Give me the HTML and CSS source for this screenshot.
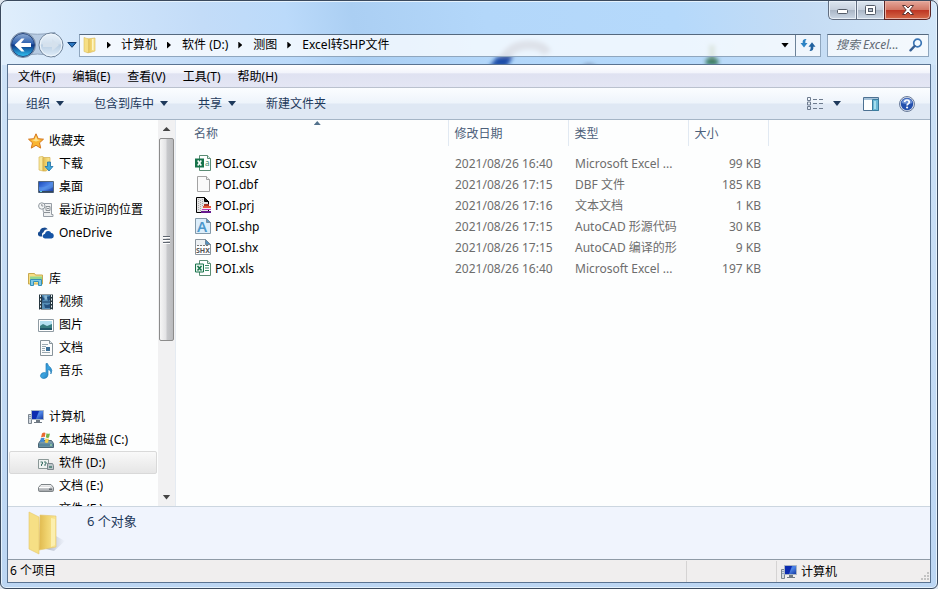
FILE: index.html
```html
<!DOCTYPE html>
<html lang="zh-CN">
<head>
<meta charset="utf-8">
<meta name="viewport" content="width=device-width, initial-scale=1">
<title>Excel转SHP文件</title>
<link rel="stylesheet" href="styles.css">
</head>
<body>
<svg class="defs" width="0" height="0" aria-hidden="true">
  <defs>
    <linearGradient id="gold" x1="0" x2="1"><stop offset="0" stop-color="#e0b94e"/><stop offset=".5" stop-color="#f0d470"/><stop offset="1" stop-color="#fae794"/></linearGradient>
    <linearGradient id="blue" x1="0" y1="0" x2="1" y2="1"><stop offset="0" stop-color="#1747b8"/><stop offset=".5" stop-color="#4f86e8"/><stop offset="1" stop-color="#10339c"/></linearGradient>
    <linearGradient id="metal" x1="0" y1="0" x2="0" y2="1"><stop offset="0" stop-color="#fafafa"/><stop offset="1" stop-color="#9b9fa3"/></linearGradient>
    <linearGradient id="orb" x1="0" y1="0" x2="0" y2="1"><stop offset="0" stop-color="#8fabd2"/><stop offset=".45" stop-color="#2a5eae"/><stop offset=".5" stop-color="#0b3585"/><stop offset="1" stop-color="#32c5f4"/></linearGradient>
    <linearGradient id="glass" x1="0" y1="0" x2="0" y2="1"><stop offset="0" stop-color="#eaf3fb"/><stop offset=".45" stop-color="#d2e0ee"/><stop offset=".5" stop-color="#b9cee3"/><stop offset="1" stop-color="#e2effa"/></linearGradient>
    <linearGradient id="note" x1="0" y1="0" x2="1" y2="1"><stop offset="0" stop-color="#1f75b5"/><stop offset=".5" stop-color="#3ba4e0"/><stop offset="1" stop-color="#1c6dac"/></linearGradient>
    <symbol id="computer" viewBox="0 0 16 16">
      <path d="M.5 5.500h3v9h-3z" fill="#d5dbe1" stroke="#7b858f"/><path d="M1.500 7.500h1M1.500 9.500h1" stroke="#4e6f92"/>
      <path d="M3.500 1.500h12v9h-12z" fill="url(#blue)" stroke="#a9b5c4"/>
      <path d="M4 2h7l-3 8H4z" fill="#0c2bb0"/>
      <path d="M8 11h4v2h2v1H6v-1h2z" fill="#6f7983"/>
    </symbol>
  </defs>
</svg>
<div class="window">
  <svg class="backdrop" viewBox="0 0 280 64" aria-hidden="true">
    <defs><filter id="soft" x="-30%" y="-30%" width="160%" height="160%"><feGaussianBlur stdDeviation="2"/></filter></defs>
    <g filter="url(#soft)">
      <path d="M32 62Q40 44 60 44Q74 44 78 52" fill="none" stroke="#7f8fac" stroke-width="9"/>
      <path d="M20 66L28 56L44 55L38 66z" fill="#1c4ea8"/>
      <path d="M112 66Q120 60 128 66z" fill="#687896"/>
      <path d="M240 44h6v18h-6z" fill="#7da392"/>
      <path d="M237 58h12v6h-12z" fill="#2d7658"/>
    </g>
  </svg>

  <header class="titlebar">
    <div class="caption">
      <button class="cap" aria-label="最小化"><svg width="13" height="9" viewBox="0 0 13 9"><rect x="1.500" y="3.500" width="10" height="4" rx="1" fill="#fff" stroke="#545c68"/></svg></button>
      <button class="cap" aria-label="最大化"><svg width="13" height="11" viewBox="0 0 13 11"><rect x="1.500" y=".5" width="10" height="9" rx="1" fill="#fff" stroke="#545c68"/><rect x="4.500" y="3.500" width="4" height="3" fill="#b5bdc9" stroke="#545c68"/></svg></button>
      <button class="cap close" aria-label="关闭"><svg width="14" height="12" viewBox="0 0 14 12"><path d="M1.500 1.500h3L7 4l2.500-2.500h3L8.800 6l3.700 4.500h-3L7 8l-2.500 2.500h-3L5.200 6z" fill="#fff" stroke="#5a3433"/></svg></button>
    </div>
  </header>

  <nav class="navbar" aria-label="导航">
    <button class="orbs" aria-label="后退和前进">
      <svg width="60" height="28" viewBox="0 0 60 28">
        <path d="M12 1.500Q28 5 46 1.500V26Q28 20 12 26z" fill="#b7cbe2" stroke="#93a7bf"/>
        <circle cx="14" cy="14" r="12.500" fill="#dde7f1" stroke="#6f849d"/>
        <circle cx="14" cy="14" r="11.500" fill="url(#orb)" stroke="#24447c"/>
        <path d="M5.500 14l7-6.500h3L12 12h10v4H12l3.500 4.500h-3z" fill="#fff"/>
        <circle cx="42" cy="14" r="12" fill="url(#glass)" stroke="#74879d"/>
        <circle cx="42" cy="14" r="10.800" fill="none" stroke="#eff6fc"/>
        <path d="M50 14l-7-6v4h-9v4h9v4z" fill="#d5e1ed"/>
      </svg>
    </button>
    <button class="recent" aria-label="最近的页面"><svg width="10" height="6" viewBox="0 0 10 6"><path d="M.8.5h8.400L5 5.300z" fill="#2b77c0" stroke="#123d71"/></svg></button>
    <div class="address">
      <svg class="folder" width="16" height="18" viewBox="0 0 16 18"><path d="M5 3l8-1v13l-5 1.500H5z" fill="url(#gold)" stroke="#d8b654" stroke-width=".6"/><path d="M2 1.500l4.500 1.500v14L2 15.500z" fill="#f6df85" stroke="#dcbf62" stroke-width=".6"/><path d="M10 3h1.500v11H10z" fill="#fdf5c4"/></svg>
      <ol class="crumbs">
        <li><a href="#">计算机</a></li>
        <li><a href="#">软件 (D:)</a></li>
        <li><a href="#">测图</a></li>
        <li><a href="#">Excel转SHP文件</a></li>
      </ol>
      <button class="drop" aria-label="以前的位置"><i class="tri"></i></button>
      <button class="refresh" aria-label="刷新"><svg width="16" height="14" viewBox="0 0 16 14"><path d="M6.500 1Q2 .8 2.700 5H.5L4 9.500 7.500 5H5.300Q5 2.500 6.500 1z" fill="#2c83c4"/><path d="M9.500 13q4.500.2 3.800-4.200h2.200L12 4.300 8.500 8.800h2.200q.3 2.500-1.200 4.200z" fill="#22629f"/></svg></button>
    </div>
    <label class="search">
      <input type="text" aria-label="搜索" placeholder="搜索 Excel...">
      <svg width="14" height="14" viewBox="0 0 14 14"><circle cx="8.500" cy="5" r="3.800" fill="#f3faff" stroke="#3a75b5" stroke-width="1.700"/><path d="M5.600 8L1.500 12.300" stroke="#365f93" stroke-width="2.400" stroke-linecap="round"/></svg>
    </label>
  </nav>

  <main class="client">
    <div class="menubar">
      <button>文件(F)</button><button>编辑(E)</button><button>查看(V)</button><button>工具(T)</button><button>帮助(H)</button>
    </div>
    <div class="toolbar">
      <button>组织<i class="tri"></i></button>
      <button>包含到库中<i class="tri"></i></button>
      <button>共享<i class="tri"></i></button>
      <button>新建文件夹</button>
      <span class="tools">
        <button class="views" aria-label="更改您的视图">
          <svg width="16" height="14" viewBox="0 0 16 14"><g fill="none" stroke="#6d7b8e"><path d="M.5.5h3v3h-3zM.5 5h3v3h-3zM.5 9.500h3v3h-3z"/><path d="M6 2.500h4M12 2.500h4M6 6.500h4M12 6.500h4M6 11.500h4M12 11.500h4"/></g></svg>
          <i class="tri"></i>
        </button>
        <button aria-label="显示预览窗格"><svg width="16" height="14" viewBox="0 0 16 14"><path d="M.5.5h15v13H.5z" fill="#fff" stroke="#4d7192"/><path d="M1 1h14v2H1z" fill="#a5c2d9"/><path d="M9.500 2.500h6v11h-6z" fill="#6ab8d6" stroke="#3b7d9f"/><path d="M11 4h2v8h-2z" fill="#a6deee"/></svg></button>
        <button aria-label="获取帮助"><svg width="16" height="16" viewBox="0 0 16 16"><circle cx="8" cy="8" r="7.500" fill="#dce3ef" stroke="#6b7c9a"/><circle cx="8" cy="8" r="6.200" fill="#2450ad"/><path d="M2.500 7a5.600 5.600 0 0 1 11 0q-5 2-11 0z" fill="#6d90d4"/><path d="M5.600 6.200Q5.800 4 8 4t2.300 2.100Q10.300 7.300 9 8q-.9.500-.9 1.500" fill="none" stroke="#fff" stroke-width="1.700"/><circle cx="8.100" cy="11.500" r="1.100" fill="#fff"/></svg></button>
      </span>
    </div>

    <div class="body">
      <aside class="tree">
        <ul>
          <li class="root"><svg width="16" height="16" viewBox="0 0 16 16"><path d="M8 .8l2.200 4.900 5.300.5-4 3.600 1.200 5.300L8 12.300l-4.700 2.800 1.200-5.300-4-3.600 5.300-.5z" fill="#f9b632" stroke="#d5761b"/><path d="M8 3l1.400 3.600 3.100.5L8 8.500 3.500 7l3.100-.4z" fill="#ffe28a"/></svg>收藏夹</li>
          <li><svg width="16" height="16" viewBox="0 0 16 16"><path d="M1 1l4-.7V15l-4-1z" fill="#f8e89c" stroke="#d9b95c" stroke-width=".7"/><path d="M5 1.500h7V12l-4 3H5z" fill="url(#gold)" stroke="#d3ad4b" stroke-width=".7"/><path d="M9.500 6h3v4.500H15L11 15l-4-4.500h2.500z" fill="#41a9dc" stroke="#1c70a8" stroke-width=".8"/></svg>下载</li>
          <li><svg width="16" height="16" viewBox="0 0 16 16"><path d="M.5 2.500h15v11H.5z" fill="url(#blue)" stroke="#54677d"/><path d="M1 12h14v1.500H1z" fill="#31475f"/><path d="M2 12.500h2" stroke="#5dd0de"/><path d="M1 8q8 1 14-5v5q-6 4-14 3z" fill="#5d9cea" opacity=".5"/></svg>桌面</li>
          <li><svg width="16" height="16" viewBox="0 0 16 16"><path d="M4 1.500h9.500v11H15v2H5.500v-4z" fill="#eef0f1" stroke="#969da5"/><circle cx="3.800" cy="4" r="3.200" fill="#f4f6f7" stroke="#91999f"/><path d="M3.800 2v2h1.500M8 4.500h4v4H8zM6 10.500h6M9 6.500h2" fill="none" stroke="#8c9297"/></svg>最近访问的位置</li>
          <li><svg width="16" height="16" viewBox="0 0 16 16"><path d="M4.500 11.500H2.200A2.600 2.600 0 0 1 1.800 6.400Q2.500 2.600 6 2.700q2-.6 3.800 1.500-3.500 0-4.300 3.100-2.400.8-1 4.200z" fill="#174b91"/><path d="M7 13.500Q4.600 13.300 4.800 11q.2-2 2.200-2.200.5-3.100 3.400-2.900 2 .1 2.800 2.100Q15.700 8.200 15.800 11q-.1 2.400-2.300 2.500z" fill="#1554a5"/></svg>OneDrive</li>
        </ul>
        <ul>
          <li class="root"><svg width="16" height="16" viewBox="0 0 16 16"><path d="M.5 2.500h6l1 1.500h7v9H.5z" fill="#f6df85" stroke="#c9a94e"/><path d="M2 5.500h12V8H2z" fill="#94d68e"/><path d="M2.500 14.500v-6h11v6h-3v-4h-5v4z" fill="#7fc9e9" stroke="#3490b8"/></svg>库</li>
          <li><svg width="16" height="16" viewBox="0 0 16 16"><path d="M1 .5h14v15H1z" fill="#263740"/><path d="M4 1h8v14H4z" fill="#568eb6"/><path d="M4 8h8" stroke="#183d64"/><path d="M4 2l3 3-3 2zM9 3l3-1v4l-2 1zM6 10l3 1 3-1v4H7z" fill="#24507d"/><path d="M6 1.500h3v4H7z" fill="#8db9d5"/><path d="M2.500 1v15M13.500 1v15" stroke="#e5edf1" stroke-dasharray="2 1.500"/></svg>视频</li>
          <li><svg width="16" height="16" viewBox="0 0 16 16"><path d="M.5 2.500h15v12H.5z" fill="#fff" stroke="#8f9ba3"/><path d="M2 4h12v9H2z" fill="#b4e0f1"/><path d="M2 9l3-2 4 2 5-2v6H2z" fill="#387d80"/><path d="M2 11h12v2H2z" fill="#205669"/></svg>图片</li>
          <li><svg width="16" height="16" viewBox="0 0 16 16"><path d="M2.500.5h9l3 3v12h-12z" fill="#fbfcfc" stroke="#87939a"/><path d="M11.500.5v3h3" fill="#dbe3e7" stroke="#87939a"/><path d="M4 4.500h6M4 6.500h4M4 8.500h3M4 10.500h3M4 12.500h8" stroke="#9aa9b1"/><path d="M8 7h4v4H8z" fill="#3c7098"/></svg>文档</li>
          <li><svg width="16" height="16" viewBox="0 0 16 16"><path d="M8 .5h1.500q.5 2.500 3 4 2.500 2.800.3 6.500.8-3.500-2.800-4.500v5.500q-.5 3.200-4 3.500-3.800-.2-3.500-3.200.8-2.900 4-2.800L8 10z" fill="url(#note)" stroke="#257fb9" stroke-width=".7"/></svg>音乐</li>
        </ul>
        <ul>
          <li class="root"><svg width="16" height="16"><use href="#computer"/></svg>计算机</li>
          <li><svg width="16" height="16" viewBox="0 0 16 16"><path d="M2.500 8.500h11l2 3v4H.5v-4z" fill="#7999a9" stroke="#4b6574"/><path d="M1 11.500h14v3H1z" fill="#58869b"/><path d="M12 13h2" stroke="#b5f2aa"/><path d="M4 1.500q2-1.500 3.500-.5l-.7 4Q5 4.500 3 5.500z" fill="#e96a30"/><path d="M8.500 1.300q2 1 3.500.2l-1 4q-1.500 1-3.200-.2z" fill="#76b34a"/><path d="M2.800 6.300q2-1 3.800-.3l-.8 4Q4 9.300 2 10.300z" fill="#438ad0"/><path d="M7.500 6.300q2 1 3.500.2l-1 4q-1.500 1-3.200-.2z" fill="#f4cc45"/></svg>本地磁盘 (C:)</li>
          <li class="selected"><svg width="16" height="16" viewBox="0 0 16 16"><path d="M.5 4.500h10v9H.5z" fill="#eff3f2" stroke="#8b9897"/><path d="M2.500 7h2v2h-1v2M6 7h2v2H7v2" fill="none" stroke="#41756b"/><path d="M9.500 8.500h5l1 2v4h-6z" fill="#bbc4c8" stroke="#7c878d"/><path d="M11 11h3v2h-3z" fill="#5f8d83"/></svg>软件 (D:)</li>
          <li><svg width="16" height="16" viewBox="0 0 16 16"><path d="M3 6.500h10l2.500 3v2.800q0 1.200-1.200 1.200H1.700Q.5 13.500.5 12.300V9.500z" fill="url(#metal)" stroke="#7e8487"/><path d="M1 9.500h11" stroke="#fff"/><path d="M11 10.500h3v1.500h-3z" fill="#666d72"/></svg>文档 (E:)</li>
          <li><svg width="16" height="16" viewBox="0 0 16 16"><path d="M3 9.500h10l2.500 3v3H.5v-3z" fill="url(#metal)" stroke="#7e8487"/></svg>文件 (F:)</li>
        </ul>
      </aside>
      <div class="scrollbar">
        <button aria-label="向上滚动"><i class="tri up"></i></button>
        <div class="track"><div class="thumb"><i class="grip"></i></div></div>
        <button aria-label="向下滚动"><i class="tri"></i></button>
      </div>

      <section class="files">
        <table>
          <colgroup><col class="c-name"><col class="c-date"><col class="c-type"><col class="c-size"></colgroup>
          <thead><tr><th class="sorted">名称<i class="tri up"></i></th><th>修改日期</th><th>类型</th><th>大小</th></tr></thead>
          <tbody>
            <tr><td><span class="file"><svg width="16" height="16" viewBox="0 0 16 16"><path d="M4.500.5h8l3 3v12h-11z" fill="#fff" stroke="#5b8c74"/><path d="M12.500.5v3h3" fill="#e8f0ec" stroke="#5b8c74"/><path d="M0 3.500h9v9H0z" fill="#17734a"/><path d="M2.700 5.500l3.600 5M6.300 5.500l-3.600 5" stroke="#fff" stroke-width="1.500"/><text x="10" y="11" font-size="8" fill="#3c8b68">a</text></svg>POI.csv</span></td><td>2021/08/26 16:40</td><td>Microsoft Excel ...</td><td>99 KB</td></tr>
            <tr><td><span class="file"><svg width="16" height="16" viewBox="0 0 16 16"><path d="M2.500.5h9l3 3v12h-12z" fill="#fafafa" stroke="#a3a3a3"/><path d="M11.500.5v3h3" fill="#eee" stroke="#a3a3a3"/></svg>POI.dbf</span></td><td>2021/08/26 17:15</td><td>DBF 文件</td><td>185 KB</td></tr>
            <tr><td><span class="file"><svg width="16" height="16" viewBox="0 0 16 16"><path d="M1.500.5h8l4 4v11h-12z" fill="#e4e4e4" stroke="#000"/><path d="M3.500 2v12M5.500 3v11M7.500 2v8" stroke="#aaa" stroke-dasharray="1 1"/><path d="M9.500.5v4h4z" fill="#111" stroke="#000"/><path d="M9 7h5v2H9z" fill="#a63628"/><path d="M8 9h8v2H8z" fill="#e65b39"/><path d="M7 11h9v2H7z" fill="#f2eaf6"/><path d="M7 12h9v1H7z" fill="#c33bb5"/><path d="M6 14h10v2H6z" fill="#671b8f"/></svg>POI.prj</span></td><td>2021/08/26 17:16</td><td>文本文档</td><td>1 KB</td></tr>
            <tr><td><span class="file"><svg width="16" height="16" viewBox="0 0 16 16"><path d="M.5.5h11l4 4v11H.5z" fill="#dceefb" stroke="#8399a9"/><path d="M11.500.5v4h4z" fill="#5a9bc7" stroke="#7890a2"/><text x="2" y="14" font-size="15" font-weight="600" fill="#4b98cc">A</text></svg>POI.shp</span></td><td>2021/08/26 17:15</td><td>AutoCAD 形源代码</td><td>30 KB</td></tr>
            <tr><td><span class="file"><svg width="16" height="16" viewBox="0 0 16 16"><path d="M.5.5h10l5 5v10H.5z" fill="#edf1f4" stroke="#8b969f"/><path d="M10.500.5v5h5z" fill="#528fbe" stroke="#72879a"/><path d="M1 7h14v8H1z" fill="#fff"/><path d="M2 6.500h12" stroke="#777" stroke-dasharray="2 1"/><text x="1" y="14" font-size="7" font-weight="700" fill="#555">SHX</text></svg>POI.shx</span></td><td>2021/08/26 17:15</td><td>AutoCAD 编译的形</td><td>9 KB</td></tr>
            <tr><td><span class="file"><svg width="16" height="16" viewBox="0 0 16 16"><path d="M4.500.5h8l3 3v12h-11z" fill="#fff" stroke="#5b8c74"/><path d="M12.500.5v3h3" fill="#e8f0ec" stroke="#5b8c74"/><path d="M.5 4h8v8h-8z" fill="#e8f5ee" stroke="#17734a"/><path d="M2.500 6l4 4.500M6.500 6l-4 4.500" stroke="#17734a" stroke-width="1.500"/><path d="M10 5.500h4M10 8h4M10 10.500h4" stroke="#3c8b68"/></svg>POI.xls</span></td><td>2021/08/26 16:40</td><td>Microsoft Excel ...</td><td>197 KB</td></tr>
          </tbody>
        </table>
      </section>
    </div>

    <section class="details">
      <svg width="40" height="44" viewBox="0 0 40 44">
        <defs><linearGradient id="shade"><stop offset="0" stop-color="#8a93a5"/><stop offset="1" stop-color="#8a93a5" stop-opacity="0"/></linearGradient></defs>
        <path d="M26 24l11 6-11 10-8-2z" fill="url(#shade)" opacity=".6"/>
        <path d="M12 4l16 1v31l-17 3z" fill="url(#gold)" stroke="#e2c56d" stroke-width=".6"/>
        <path d="M1 1l10 5v37L1 38z" fill="#f6df85" stroke="#e5c86c" stroke-width=".6"/>
        <path d="M23 7l4 1v26l-4 2z" fill="#fcefae"/>
      </svg>
      <p>6 个对象</p>
    </section>
    <footer class="status">
      <span class="count">6 个项目</span>
      <span class="blank"></span>
      <span class="place"><svg width="16" height="16"><use href="#computer"/></svg>计算机</span>
      <svg class="sizer" width="12" height="12" viewBox="0 0 12 12"><path d="M9 2h2v2H9zM9 5h2v2H9zM9 8h2v2H9zM6 5h2v2H6zM6 8h2v2H6zM3 8h2v2H3z" fill="#c3c3c3"/></svg>
    </footer>
  </main>
</div>
</body>
</html>
```
FILE: styles.css
```css
* { box-sizing: border-box; }

body {
  margin: 0;
  background: #dfe6ee;
  color: #000;
  font: 12px/20px "Noto Sans", "Noto Sans CJK SC", sans-serif;
}

button, input {
  margin: 0;
  padding: 0;
  border: 0;
  background: none;
  color: inherit;
  font: inherit;
}

ul, ol, p { margin: 0; padding: 0; list-style: none; }
a { color: inherit; text-decoration: none; }
svg { display: block; flex: none; }
.defs { position: absolute; }

.tri {
  flex: none;
  width: 8px;
  height: 5px;
  background: currentColor;
  clip-path: polygon(0 0, 100% 0, 50% 100%);
}
.tri.up { height: 4px; clip-path: polygon(50% 0, 100% 100%, 0 100%); }

/* Window frame */
.window {
  position: relative;
  display: flex;
  flex-direction: column;
  height: 100vh;
  padding: 0 6px 5px;
  border: 1px solid #3b4a5e;
  border-radius: 7px 7px 6px 6px;
  box-shadow: inset 0 0 0 1px #e5f2fd;
  background:
    linear-gradient(80deg, #e1effc 0, #cfe4fa 12%, #c3dcf8 22%, #bbdafa 31%, #abcff3 38%, #b3d7fa 52%, #b5d9fb 72%, #c5dcf4 86%, #d3e7f9 100%) 0 0 / 100% 64px no-repeat,
    linear-gradient(#cfe3f7, #bcd6f3);
}

.backdrop {
  position: absolute;
  top: 0;
  left: 50%;
  width: 280px;
  height: 64px;
}

.titlebar { display: flex; justify-content: flex-end; height: 31px; }
.caption { display: flex; height: 19px; }
.cap {
  display: flex;
  align-items: center;
  justify-content: center;
  width: 28px;
  border: 1px solid #616d80;
  border-width: 0 0 1px 1px;
  background: linear-gradient(#dde6f0, #c6d0dd 48%, #a9b5c5 50%, #ccd8e6);
  box-shadow: inset 0 0 0 1px #e8eff7;
}
.cap:first-child { border-bottom-left-radius: 5px; }
.cap.close {
  width: 47px;
  border-right-width: 1px;
  border-color: #5b2525;
  border-bottom-right-radius: 5px;
  background: linear-gradient(#e5a79a, #d27866 48%, #bd3422 50%, #d56a49);
  box-shadow: inset 0 0 0 1px #e9b0a3;
}

.navbar {
  position: relative;
  display: flex;
  align-items: center;
  height: 32px;
  padding: 0 2px 6px;
}
.recent { margin: 0 0 0 -4px; padding: 4px 2px; }
.address, .search {
  display: flex;
  align-items: center;
  height: 23px;
  border: 1px solid #8fa6be;
  border-top-color: #55697f;
  background: rgba(255, 255, 255, .74);
}
.address { flex: 1; padding-left: 2px; }
.crumbs { display: flex; flex: 1; margin-left: 5px; }
.crumbs li { display: flex; align-items: center; }
.crumbs li::before {
  content: "";
  width: 4px;
  height: 7px;
  margin: 0 10px 0 4px;
  background: #000;
  clip-path: polygon(0 0, 100% 50%, 0 100%);
}
.crumbs li + li::before { margin: 0 11px 0 10px; }
.drop { display: flex; padding: 6px; }
.refresh {
  display: flex;
  align-items: center;
  justify-content: center;
  align-self: stretch;
  width: 25px;
  border-left: 1px solid #6c8299;
}
.search { width: 102px; margin-left: 6px; padding: 0 5px 0 8px; }
.search input { flex: 1; min-width: 0; font-style: italic; outline: 0; }
.search input::placeholder { color: #626b75; opacity: 1; }

/* Client area */
.client {
  position: relative;
  display: flex;
  flex: 1;
  flex-direction: column;
  min-height: 0;
  border: 1px solid #5a7391;
  background: #fdfefe;
}

.menubar {
  display: flex;
  flex: none;
  gap: 1px;
  height: 23px;
  padding: 2px 0 0 2px;
  border-bottom: 1px solid #bac1ce;
  background: linear-gradient(#fff, #f2f4fb 36%, #dfe2f1 40%, #e4e6f4);
}
.menubar button { padding: 0 8px; }

.toolbar {
  display: flex;
  flex: none;
  align-items: center;
  gap: 30px;
  height: 32px;
  padding: 0 15px 0 18px;
  border-bottom: 1px solid #a5b5c6;
  background: linear-gradient(#fbfdff, #eef4fb 48%, #dfe8f4 52%, #dfe8f4);
  color: #1e395b;
}
.toolbar button { display: flex; align-items: center; gap: 6px; }
.tools { display: flex; align-items: center; gap: 20px; margin-left: auto; }
.toolbar .views { gap: 10px; margin-right: 2px; }

.body { display: flex; flex: 1; min-height: 0; }

.tree {
  display: flex;
  flex-direction: column;
  gap: 23px;
  width: 150px;
  padding: 9px 1px 0;
  overflow: hidden;
}
.tree li {
  display: flex;
  align-items: center;
  gap: 5px;
  height: 23px;
  padding-left: 28px;
  border: 1px solid transparent;
  white-space: nowrap;
}
.tree .root { padding-left: 18px; }
.tree .selected {
  border-color: #d9d9d9;
  border-radius: 2px;
  background: linear-gradient(#f9f9f9, #e6e6e6);
}

.scrollbar {
  display: flex;
  flex-direction: column;
  width: 17px;
  background: #f1f1f2;
}
.scrollbar button {
  display: flex;
  align-items: center;
  justify-content: center;
  height: 18px;
  color: #444;
}
.track { flex: 1; }
.thumb {
  display: flex;
  align-items: center;
  justify-content: center;
  width: 15px;
  height: 58%;
  margin: 0 auto;
  border: 1px solid #8c8c8c;
  border-radius: 2px;
  background: linear-gradient(90deg, #f6f6f6, #e3e3e5 45%, #c7c8cb 55%, #b9babd);
}
.grip {
  width: 7px;
  height: 8px;
  background: repeating-linear-gradient(#5f6670 0 1px, #fff 1px 2px, transparent 2px 3px);
}

.files { flex: 1; padding-left: 12px; border-left: 1px solid #e5ebf2; overflow: hidden; }
table { width: 580px; table-layout: fixed; border-collapse: collapse; color: #6d6d6d; }
.c-name { width: 260px; }
.c-date, .c-type { width: 120px; }
.c-size { width: 80px; }
th {
  height: 29px;
  padding: 3px 6px 0;
  border-right: 1px solid #e1e9f2;
  color: #4c607a;
  font-weight: 400;
  text-align: left;
}
thead tr { border-bottom: 7px solid transparent; }
.sorted { position: relative; }
.sorted .tri { position: absolute; top: 1px; left: 50%; width: 7px; margin-left: -4px; color: #52718c; }
td { height: 21px; padding: 0 7px; line-height: 21px; white-space: nowrap; overflow: hidden; }
td:last-child { text-align: right; }
.file { display: flex; align-items: center; gap: 4px; color: #000; }
.file svg { overflow: visible; }

.details {
  display: flex;
  flex: none;
  gap: 19px;
  height: 53px;
  padding: 4px 20px;
  border-top: 1px solid #ccd6e0;
  background: #f0f4fd;
  color: #1e395b;
  font-size: 13px;
}

.status {
  display: flex;
  flex: none;
  height: 23px;
  padding-top: 1px;
  border-top: 1px solid #8f9aa6;
  background: #f0eeee;
}
.count { flex: 1; padding-left: 2px; }
.blank { width: 91px; border: 1px solid #d5d3d3; border-width: 0 1px; }
.place { display: flex; align-items: center; gap: 4px; width: 141px; padding-left: 4px; }
.sizer { align-self: flex-end; }
```
